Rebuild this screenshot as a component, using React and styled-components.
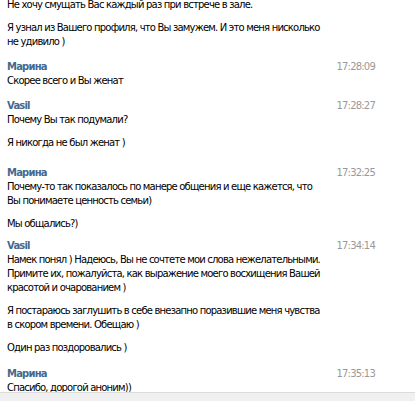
import styled, { createGlobalStyle } from "styled-components";

const GlobalStyle = createGlobalStyle`
  html, body {
    margin: 0;
    padding: 0;
    background: #fff;
  }
  body {
    font-family: "DejaVu Sans", Tahoma, sans-serif;
    font-size: 10px;
    letter-spacing: -0.8px;
    color: #000;
  }
`;

const messages = [
  {
    name: null,
    space: 0,
    paragraphs: [
      ["Не хочу смущать Вас каждый раз при встрече в зале."],
      [
        "Я узнал из Вашего профиля, что Вы замужем. И это меня нисколько",
        "не удивило )",
      ],
    ],
  },
  {
    name: "Марина",
    time: "17:28:09",
    space: 11,
    paragraphs: [["Скорее всего и Вы женат"]],
  },
  {
    name: "Vasil",
    time: "17:28:27",
    space: 11,
    paragraphs: [["Почему Вы так подумали?"], ["Я никогда не был женат )"]],
  },
  {
    name: "Марина",
    time: "17:32:25",
    space: 16,
    paragraphs: [
      [
        "Почему-то так показалось по манере общения и еще кажется, что",
        "Вы понимаете ценность семьи)",
      ],
      ["Мы общались?)"],
    ],
  },
  {
    name: "Vasil",
    time: "17:34:14",
    space: 8,
    paragraphs: [
      [
        "Намек понял ) Надеюсь, Вы не сочтете мои слова нежелательными.",
        "Примите их, пожалуйста, как выражение моего восхищения Вашей",
        "красотой и очарованием )",
      ],
      [
        "Я постараюсь заглушить в себе внезапно поразившие меня чувства",
        "в скором времени. Обещаю )",
      ],
      ["Один раз поздоровались )"],
    ],
  },
  {
    name: "Марина",
    time: "17:35:13",
    space: 12,
    paragraphs: [["Спасибо, дорогой аноним))"]],
  },
];

const App = () => {
  return (
    <Page>
      <GlobalStyle />
      <History>
        {messages.map((msg, i) => (
          <Group key={i} $space={msg.space}>
            {msg.name && (
              <Header>
                <Name>{msg.name}</Name>
                <Time>{msg.time}</Time>
              </Header>
            )}
            {msg.paragraphs.map((lines, j) => (
              <Paragraph key={j}>
                {lines.map((line, k) => (
                  <Line key={k}>{line}</Line>
                ))}
              </Paragraph>
            ))}
          </Group>
        ))}
      </History>
      <Footer />
    </Page>
  );
};

export default App;

const Page = styled.div`
  width: 415px;
  height: 401px;
  overflow: hidden;
  display: flex;
  flex-direction: column;
  background: #fff;
`;

const History = styled.div`
  flex: 1;
  min-height: 0;
  display: flex;
  flex-direction: column;
  padding: 0 40px 0 7px;
  margin-top: -2px;
`;

const Group = styled.div`
  display: flex;
  flex-direction: column;
  flex-shrink: 0;
  gap: 9px;
  margin-top: ${(p) => p.$space}px;
`;

const Header = styled.div`
  display: flex;
  align-items: center;
  justify-content: space-between;
  height: 14px;
  margin-bottom: -9px;
`;

const Name = styled.span`
  color: #45688e;
  font-weight: bold;
  line-height: 14px;
`;

const Time = styled.span`
  color: #999;
  line-height: 14px;
`;

const Paragraph = styled.div`
  display: flex;
  flex-direction: column;
`;

const Line = styled.span`
  line-height: 14px;
  white-space: nowrap;
`;

const Footer = styled.div`
  flex: 0 0 8px;
  border-top: 1px solid #dcdcdc;
  background: #f0f0f0;
`;
